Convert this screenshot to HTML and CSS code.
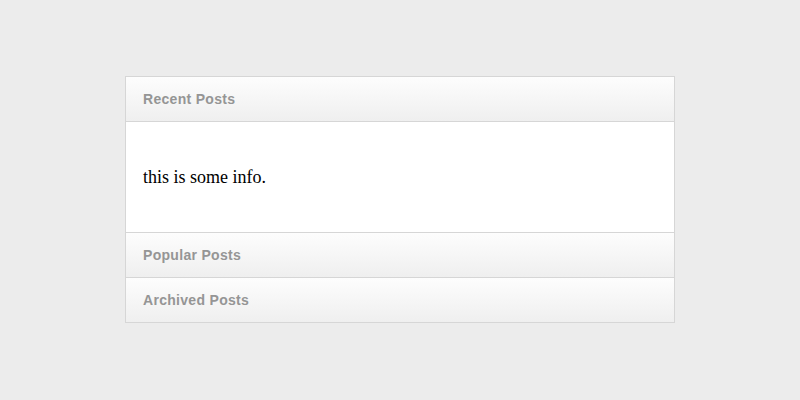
FILE: index.html
```html
<!DOCTYPE html>
<html>
<head>
<meta charset="utf-8">
<link rel="stylesheet" href="styles.css">
</head>
<body>
<div class="accordion">
  <div class="section">
    <div class="header">Recent Posts</div>
    <div class="content"><p>this is some info.</p></div>
  </div>
  <div class="section">
    <div class="header">Popular Posts</div>
  </div>
  <div class="section">
    <div class="header">Archived Posts</div>
  </div>
</div>
</body>
</html>
```
FILE: styles.css
```css
html, body {
  margin: 0;
  padding: 0;
}
body {
  background: #ececec;
  padding-top: 76px;
}
.accordion {
  box-sizing: border-box;
  width: 550px;
  margin: 0 auto;
  border: 1px solid #d6d6d6;
  border-bottom: none;
  background: #fff;
}
.header {
  height: 44px;
  line-height: 44px;
  padding: 0 17px;
  border-bottom: 1px solid #d6d6d6;
  background: linear-gradient(to bottom, #fdfdfd, #efefef);
  font-family: "Liberation Sans", Arial, sans-serif;
  font-weight: bold;
  font-size: 14px;
  letter-spacing: 0.3px;
  color: #959595;
}
.content {
  padding: 27px 17px 26px;
  border-bottom: 1px solid #d6d6d6;
  background: #fff;
}
.content p {
  margin: 18px 0;
  font-family: "Liberation Serif", "Times New Roman", serif;
  font-size: 18px;
  color: #000;
}
```
